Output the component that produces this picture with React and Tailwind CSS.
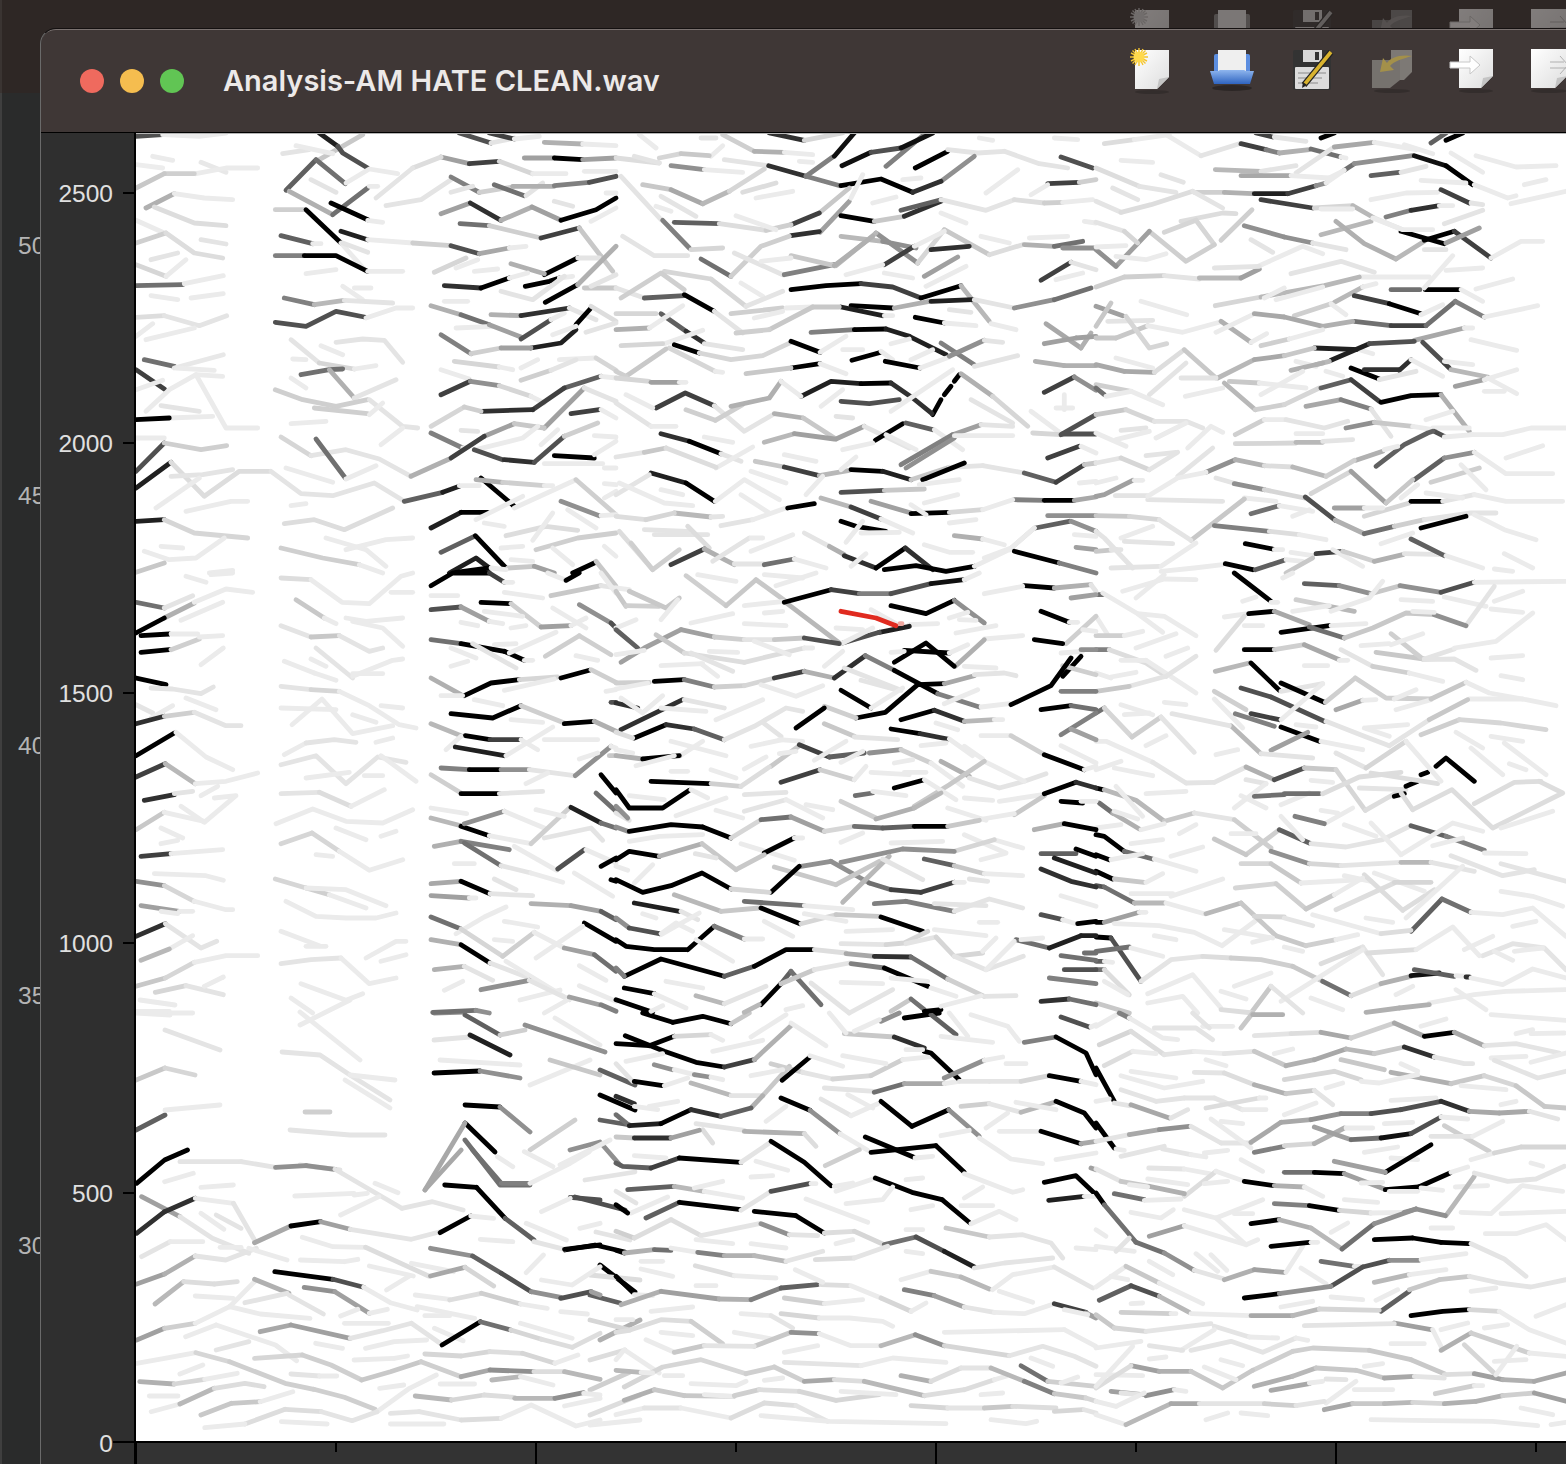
const T1 = `50 0 10 80 5|e8 80 5 190 10 270 0|e8 50 70 110 82|ea 0 95 80 105|e5 195 88 270 118|e8 180 122 270 105 365 105|c8 85 122 175 122|c0 0 165 85 122|b0 30 225 115 182|e8 115 182 205 195 290 200|d8 55 222 175 270 270 278|e8 0 262 85 300|c8 0 330 90 300|d8 90 300 175 360 260 375|e0 195 320 270 333|e0 45 380 125 360|d0 0 395 90 430|e8 90 430 150 380|70 0 458 140 455|e8 145 452 262 428|e8 45 488 125 500|e8 165 495 262 482|d8 0 553 85 548|e0 85 548 190 578 272 548|e8 0 610 50 572|e8 30 620 175 585|70 25 680 115 700|e5 115 705 262 665|e8 120 705 235 712|40 0 710 85 768|e8 0 770 80 742|e8 30 835 100 770 180 725 260 730|e0 75 818 190 835|e8 100 855 230 850|e8 180 725 270 885 365 885|00 0 860 100 855|e8 0 915 85 915|50 0 1015 85 930|c8 85 930 195 950 272 938|20 0 1065 105 988|d8 105 988 205 1090 310 1015 400 1015|e0 105 1030 200 1025 290 1010|e8 60 1125 190 1035|e8 150 1135 285 1105 335 1105|20 0 1165 85 1160|d0 85 1160 175 1200 335 1215|e8 75 1240 140 1245|e8 25 1255 100 1280 180 1275 265 1215|c0 0 1318 85 1290|e8 220 1320 290 1312
c0 550 80 680 5|20 550 0 605 40|50 605 40 620 60 695 105|60 540 80 450 172|70 540 80 628 152|e8 630 150 700 108 785 122|e0 440 62 520 50|e8 480 38 590 62|b0 460 175 590 245|70 590 245 695 165|e8 700 160 725 160|e0 525 140 600 178|c8 418 230 505 230|00 510 230 615 330|e8 615 330 690 415|00 585 210 695 260|e8 695 262 740 268|60 435 308 530 332|e8 530 332 555 332|20 615 295 695 320|e8 695 320 830 330|c8 830 330 945 338|50 945 338 1030 362|a8 1030 362 1120 345|e8 1120 345 1170 340|e0 620 330 695 358|80 418 368 505 368|00 505 368 600 368 695 415|e8 695 415 800 415|e8 510 422 600 410|e8 620 460 680 500|e8 655 465 705 465|80 445 495 535 515|b8 535 515 625 502|e0 625 502 770 510|50 418 568 510 580 600 535 685 552|e8 690 555 780 525 830 525|e0 465 620 550 690|d0 550 690 655 708|e8 655 708 720 698|e0 600 628 680 618 745 622 800 688|e8 555 638 620 665|e8 470 678 510 680|70 495 725 580 710 620 708|b0 580 710 655 795|e0 655 795 780 740|e8 465 735 510 765|c8 418 770 500 800 600 820 695 800|c8 535 825 695 842|e0 700 800 800 880 845 885|e8 735 935 800 885|e8 700 845 740 810|e8 465 872 570 865|d0 435 912 525 968|e0 525 968 630 950 730 978 825 1030|70 540 918 628 1035|e8 630 1038 720 998|b0 825 1030 940 978|e8 450 1005 590 1048|e0 405 1015 495 1082 590 1088 715 1050 805 1105|60 805 1105 920 1078|20 920 1078 970 1060|e8 465 1118 510 1112|d8 445 1172 535 1160 625 1190 770 1125|e8 570 1215 690 1250|e8 630 1250 750 1220 830 1215|e8 690 1250 750 1300|c8 435 1245 560 1275 670 1295|e8 670 1295 740 1320
50 970 0 1065 30|e0 1065 30 1135 15|40 1060 0 1135 18|e8 1135 18 1210 10|b0 1225 28 1340 33|e8 1340 33 1440 38|a0 915 72 1000 92|40 1000 92 1090 85|d0 1090 85 1190 122|e8 1190 122 1290 122|a0 1165 75 1255 75|00 1255 75 1340 80|a0 1340 80 1440 75|e8 1345 115 1440 115|d8 830 105 915 72|e0 720 195 830 105|e0 750 218 855 200 945 140|80 945 132 1030 178|c8 1030 178 1130 162|70 1075 155 1165 188|e0 1170 188 1220 150|e0 945 178 1010 160|b0 1130 160 1255 160|80 1255 158 1360 148|50 1360 148 1440 130|a0 915 242 1003 210|30 1003 210 1095 262|b0 1095 262 1188 222|a0 1188 222 1275 262|00 1275 262 1380 230 1440 195|e0 1255 205 1310 220|e8 1365 265 1440 225|70 972 272 1060 278|c8 1060 278 1215 315|40 1215 315 1330 285|c0 1330 285 1395 370|c0 1395 370 1430 415|e8 1410 180 1440 180|00 1225 425 1325 375|e0 1325 375 1390 375|b0 1125 392 1225 422|d0 895 418 990 375|e8 960 405 1025 380|e8 1015 415 1085 408|30 925 458 1035 465|00 1035 465 1120 435|e8 1120 435 1175 420|00 1168 460 1240 445 1270 435|e8 1270 435 1310 430|00 1228 508 1325 455|b0 1325 455 1440 340|c0 1345 465 1440 465|e0 1365 460 1440 425|e0 1095 475 1190 500 1285 430|e8 925 505 995 505|b0 885 518 975 545|70 975 545 1060 575|e8 960 585 1070 580|a0 1060 575 1155 612|50 1155 618 1245 560|e8 1245 560 1285 540|b0 1065 545 1155 548|30 1155 548 1300 525|e0 1300 525 1380 560|00 1320 575 1365 525|20 1185 645 1275 630 1320 590|d8 1365 520 1440 565|e8 1250 605 1320 580|e0 1350 598 1440 570|80 915 605 1005 662|c8 1005 662 1095 645|a0 1095 645 1185 645|d0 955 685 1090 702|e8 1090 702 1130 710|e8 1155 705 1205 680|e8 1270 680 1380 675|d0 1380 675 1440 712|c8 1155 742 1245 712|e0 1245 712 1320 680|e8 915 710 1000 738|40 915 785 1003 745|90 1003 745 1090 758|d0 1090 758 1185 790|e8 1185 790 1225 810|60 1285 765 1395 730|40 1190 830 1285 765|e8 1395 730 1440 735|30 1035 835 1190 830|d0 885 880 985 822|c8 985 822 1035 835|a0 1225 885 1345 765|e0 1345 765 1440 805|40 1305 842 1390 830|e8 1395 830 1440 855|a0 1045 910 1135 872|c0 1135 872 1225 885|80 885 900 980 945|e8 980 945 990 945|40 945 975 1045 910|e8 1020 950 1160 915 1205 880|e8 1215 935 1265 890|e8 1375 908 1440 912|e0 975 892 1025 895|50 1015 950 1100 980|30 1105 980 1195 988|50 1195 988 1285 910|c8 1285 910 1385 870|00 1255 968 1375 975|e8 1225 992 1400 992|e8 1375 965 1440 925|e8 1405 1005 1440 1005|00 1035 1035 1135 1120|b0 1020 1040 1100 1048|c8 1100 1048 1225 1058|e8 1225 1058 1250 1058|e8 1135 1125 1320 1040|c8 1320 1040 1440 1145|90 1275 1105 1390 1148|e8 1395 1148 1440 1145|e8 1405 1052 1440 1055|e8 1405 1095 1440 1075|e8 970 1058 1030 1058|20 885 1185 975 1138|00 975 1138 1055 1138|e8 1020 1160 1160 1090|e8 1045 1170 1105 1180|d8 1110 1208 1230 1180 1325 1192|e8 1190 1222 1250 1140|e8 1295 1130 1380 1185|c8 1200 1250 1325 1215 1440 1200|e8 1405 1240 1440 1270|60 915 1258 1015 1210|00 1018 1208 1110 1305|c0 1115 1305 1195 1300|a0 1195 1300 1255 1320|e8 1250 1245 1310 1295|e8 1095 1245 1160 1240|e8 1125 1280 1190 1285|20 940 1320 1020 1275 1060 1305|00 960 1318 1060 1305|e8 1065 1305 1110 1310|00 1310 1320 1375 1290|c0 1380 1285 1440 1360`;
const T2 = `30 460 0 565 22|d0 565 22 680 0|c8 320 5 415 55|b0 415 55 505 58|e8 505 58 590 65|e0 255 15 300 15|e8 285 70 320 38|e8 70 5 120 45|d8 0 75 130 90|e0 55 70 130 90|d0 130 75 195 62|c0 195 62 280 68|90 165 98 265 110|e8 265 110 380 118|e0 325 80 455 98|30 458 98 570 130|80 570 130 672 158|80 570 130 650 72|10 655 70 715 0|10 678 98 765 58|50 765 58 855 45|80 810 100 930 0|10 855 45 950 0|00 898 105 995 55|e0 995 50 1085 60 1165 55|e0 1165 55 1270 92 1355 105|90 975 145 1075 70|50 1335 72 1430 105|40 1295 152 1390 148|c8 1390 148 1440 140|e8 1245 185 1295 155|e8 1110 180 1205 110|00 675 158 795 138 890 178|30 890 178 975 145|e8 1090 15 1130 22|e8 1315 15 1385 20|e8 860 140 915 135|e8 550 85 590 88|e0 15 130 75 195 135 260|c0 80 155 165 170|a8 165 170 260 212|b8 260 212 340 175|d0 340 175 445 108|d8 380 178 480 150|e8 420 195 530 175|e0 135 190 240 250|e8 120 220 165 235|c0 610 240 700 165|40 525 275 610 240|a0 612 298 700 205|30 525 308 610 296|00 675 248 775 265|c0 775 265 865 250|30 865 250 975 205|60 855 232 975 200|e0 975 200 1110 232 1195 200|d8 1195 200 1285 210|c8 1285 210 1340 208|e8 1340 208 1430 200|e8 770 210 840 192|e8 705 195 740 125|60 175 268 310 272|d8 310 272 450 292|c8 450 292 525 275|80 140 262 220 345|d0 225 350 320 345|e8 360 248 480 290|e8 975 240 1050 270|e8 1405 265 1440 270|b8 675 310 800 325|90 800 325 900 345|90 780 300 905 390|b8 660 398 780 300|d0 905 390 985 290|c0 985 290 1120 365|d8 1120 365 1220 335|30 945 350 1060 340|40 805 395 895 340|e8 895 340 985 295|a0 925 430 1025 372|e8 930 460 1050 400|b0 1225 335 1315 340|70 1315 340 1400 325|90 1340 345 1440 345|e8 1095 310 1180 330|e8 1240 315 1355 310|e0 20 310 115 368 215 368|70 255 378 345 430|c8 345 430 435 340 520 310|e0 355 360 500 425|80 505 425 655 395|c0 525 368 655 398|b0 655 398 770 310|e8 435 385 525 375|e8 690 425 800 395|e8 805 420 890 435|40 1275 442 1365 388|e0 1365 388 1440 410|e8 1320 440 1400 420|d0 145 415 285 438|d0 285 438 390 520|e8 375 450 440 490|e0 0 465 85 495|60 85 495 205 488|00 205 485 295 535|e0 295 535 380 600|c8 15 495 135 420 205 470|e0 390 520 500 475|00 525 470 630 458 735 452|40 735 452 830 462 915 495|00 915 495 1035 458|b8 1035 458 1120 565|e8 1125 572 1200 590|00 705 518 830 525|20 675 522 800 548|e8 805 548 830 548|b0 835 525 940 505|20 945 505 1070 500|e0 1075 500 1195 525|90 1195 525 1315 500|70 1315 500 1425 465|00 898 553 985 570|e8 985 570 1080 578|e0 1000 530 1065 538|c8 345 542 500 525|e8 415 555 500 535|e8 510 525 590 522|c0 590 522 670 522|c0 460 590 590 522|c8 360 600 460 590|d0 0 542 120 542|60 135 542 210 595|30 210 595 265 630|b0 0 590 100 585|e8 100 585 200 518|e8 145 632 260 592|d0 15 638 140 632|00 175 635 250 660|80 585 598 715 590|00 715 590 810 588|20 810 588 880 610|20 880 610 990 665|e0 265 632 380 650|d0 250 660 345 680 440 668 525 628|00 525 625 612 658|e8 612 658 690 610|e8 680 650 740 650|e8 825 632 880 618|00 525 705 612 692|e8 612 692 690 722|00 708 682 795 658|e8 795 655 830 680|00 808 685 912 705|e8 912 705 1000 672|e8 885 680 950 650|c0 390 722 525 705|d0 160 645 298 715|e8 298 715 320 718|c0 30 730 150 648|c8 0 715 30 730|d0 0 735 100 745|a0 105 748 190 748|e8 190 748 210 748|80 975 630 1075 695|90 1000 670 1105 622|e0 1105 622 1160 628|e0 1075 700 1205 668|b0 1258 685 1345 698|b0 1345 698 1440 698|a8 1290 572 1395 645|b0 1395 645 1425 600|a0 1285 632 1380 615|a0 1380 615 1440 610|40 1285 778 1375 732|90 1375 732 1440 772|00 950 845 975 800|00 985 785 1005 760|00 1015 745 1030 725|20 555 790 645 745 735 752|00 735 752 825 750|30 825 750 890 795 948 842|b0 1035 722 1130 790|d0 1130 790 1235 880|e0 1065 800 1190 870|40 120 825 208 780 295 818|e0 295 818 385 895 470 845|b0 475 842 562 855|c0 562 855 660 918|a0 660 918 745 880|e0 745 880 880 945|c8 210 830 298 862|c8 298 862 380 815|b0 345 820 460 795 495 745|e8 495 745 555 790|e8 30 785 110 825|e0 0 810 105 880|e8 105 880 180 880|e8 615 820 680 770|50 675 805 760 812 850 800|e8 825 835 1010 710|e0 660 850 710 855|e8 1320 825 1370 825|e8 1345 785 1345 830|e8 1245 835 1340 905|d0 1250 900 1335 905|50 1335 905 1440 845|50 1340 903 1440 903|00 778 922 860 872|60 870 870 950 890|e8 955 890 1040 950|e8 810 905 900 950|a0 1010 905 1095 875|80 855 995 1010 905|90 870 1005 1015 915|e8 1015 908 1190 908|e0 1095 875 1190 880|30 135 902 220 925|00 220 925 315 962|e0 315 962 375 985|e8 300 1005 410 942|e8 265 912 350 928|e0 0 972 85 958|c0 85 958 150 945|d8 150 945 300 1003|b8 445 928 535 902|a0 535 902 655 918|e8 680 950 770 930|c0 418 985 505 1002|40 505 1002 610 1028|b8 610 1028 700 1012|00 705 1010 800 1015|20 800 1015 885 1040|c0 885 1040 1000 1003|e0 1000 1003 1100 998|e0 1100 998 1225 1020|60 1225 1020 1320 1048|40 1320 1048 1405 995|c0 1405 995 1440 990|00 920 1040 1045 990|e8 1390 1050 1440 1045|e8 505 965 600 985|e8 675 1010 720 972|40 1295 975 1390 940|e8 1395 940 1440 960|20 105 1020 210 1050|00 210 1050 295 1105|e8 298 1105 385 1040 490 1100|e0 0 1085 100 1025|e8 405 1015 510 1050|e8 135 1070 200 1085|e8 10 1050 145 1110 230 1118|e8 375 1085 460 1140|50 675 1078 805 1072|c0 805 1072 925 1068|e8 910 1055 1030 1040|e8 570 1085 620 1030|e8 925 1110 1025 1085|80 1195 1100 1285 1102|00 1285 1102 1375 1102|a8 1375 1102 1440 1092|d8 0 1150 90 1160|b8 175 1140 285 1152|d0 90 1160 175 1140|e0 285 1152 320 1150|e0 315 1178 410 1160|e8 410 1160 510 1125|00 515 1125 595 1112|b8 615 1095 705 1122|40 705 1122 795 1158|e8 795 1158 890 1200|a0 765 1105 885 1140|00 885 1142 1000 1138|d0 1000 1138 1100 1130|e8 1100 1130 1190 1100|e8 885 1115 930 1145|e8 1000 1170 1080 1160|90 1295 1148 1440 1148|00 675 1165 720 1180 810 1195|e8 690 1228 740 1165|e8 735 1200 850 1198|b0 1015 1208 1100 1218|e8 1100 1218 1165 1235|60 1258 1185 1360 1165|d8 1180 1250 1255 1185|90 1365 1165 1440 1195|e8 1375 1205 1440 1210|a0 1380 1243 1440 1250|e0 85 1190 215 1195|e0 115 1205 275 1205|d8 215 1180 280 1245|d8 10 1195 110 1310|c8 45 1230 110 1310 190 1250|40 165 1295 265 1248|b0 265 1248 355 1295|e0 355 1293 445 1293|70 445 1295 535 1278|e8 535 1278 630 1305|e0 290 1285 400 1215|e8 405 1215 440 1215|e8 405 1255 530 1205|e0 565 1200 640 1240|b0 640 1240 685 1265|30 685 1268 780 1305|00 780 1305 868 1245|30 868 1245 950 1310|00 805 1310 900 1298 990 1315 1075 1300|e8 1075 1300 1180 1250 1255 1185|e8 705 1300 750 1262|e8 925 1235 1000 1258|e8 1005 1258 1070 1258|e8 1105 1275 1185 1245|00 1195 1255 1330 1290|80 1330 1290 1440 1320`;
const T3 = `d8 25 32 115 20|e8 115 20 220 5|e8 215 8 315 68|e0 315 68 430 32|40 435 32 510 50|80 510 50 550 60|b0 550 60 640 50|70 645 48 735 72|e8 735 72 750 75|40 480 0 530 12|e0 535 12 630 25|e0 600 120 710 45|00 675 15 715 0|a8 715 42 835 28|e8 835 28 960 50|e8 925 35 1010 62|60 1005 30 1050 0|00 1050 22 1100 0|e8 75 82 170 88|e0 195 125 262 148|b8 358 110 495 115|e0 495 115 600 98|a8 435 128 580 128|e8 585 128 700 135|e8 700 135 745 112|70 745 112 775 92|90 775 92 950 68|10 955 68 1050 98|00 1050 98 1130 155|e8 1135 155 1235 195 1260 188|60 825 128 910 118|e0 915 118 990 100|e8 1065 60 1160 118|e8 1140 68 1260 102 1380 98|e8 1285 155 1350 140|e8 975 142 1110 150|e8 825 200 930 180 1025 178|40 1035 170 1120 210|e0 1125 210 1160 215|e8 1245 212 1410 175|d8 0 105 130 160|e0 50 165 125 200|e0 130 160 240 178|c8 295 178 385 178|b0 385 178 470 182|20 475 182 575 182|40 575 182 660 158|90 660 158 690 150|e8 690 150 745 112|e0 0 205 75 238|d8 75 238 165 215 290 175|e0 290 175 380 225|40 495 200 650 225|d0 655 225 770 218|b8 770 218 835 255|e0 835 255 920 290|e8 675 228 770 228|b8 675 305 825 265|80 870 252 945 232|30 945 232 1030 218|e8 1030 218 1070 218|b0 720 265 805 332 900 378|b8 900 378 985 325|00 915 295 1045 332|00 985 322 1075 295|40 1075 295 1185 375|a0 1050 330 1150 285|e8 1185 375 1275 325 1340 325|e0 985 350 1050 350|e0 1045 272 1160 232|e8 830 255 920 290 1010 290|e0 0 268 85 295|d8 255 265 380 240 420 242|d0 205 298 300 262|d0 300 262 355 335|c8 160 295 270 385 355 335|a0 60 400 160 295|90 0 350 60 400|e8 60 370 150 380 210 362|e8 0 342 90 338|d0 85 295 125 330|c8 375 322 468 230|90 445 278 565 312|90 565 312 650 330|e0 650 330 750 350|e0 465 320 530 358|e8 490 398 620 340 680 362|c8 0 462 85 432|c8 85 432 205 428|e0 205 428 310 438|b8 310 435 435 435|a0 435 435 490 408|e0 355 405 490 400|e0 585 422 735 385 835 418|e8 795 432 1000 432|d0 358 518 495 492|b8 495 492 685 458 790 432|e8 505 495 565 465|e8 540 500 680 462|b8 715 508 800 462|e8 800 462 840 452|70 885 470 972 470|00 988 470 1090 470|e8 1095 470 1160 505|e8 985 465 1070 368|e8 1050 412 1160 405|e8 1140 468 1250 438|40 775 488 880 512|00 880 512 975 542|e8 975 545 1040 515|70 775 565 885 578|40 885 578 990 578|70 990 578 1078 505|80 1078 505 1165 552|e8 1165 552 1325 518|c8 595 548 705 512|e8 705 512 750 545|e8 135 505 272 545|a0 0 520 80 548|c0 0 580 45 510|e0 35 565 170 562|c0 60 615 155 578|e8 155 578 260 598 370 568|c0 0 615 60 615|d0 90 550 160 645 212 632|b0 375 565 465 628|e8 465 628 512 602|e8 360 598 470 545|a8 475 542 565 552|a8 565 552 680 580|b0 680 580 770 565|c8 495 638 580 618|e8 580 618 680 590|a8 955 622 1105 585|e8 1105 585 1130 585|20 655 645 790 650|e8 790 650 830 662|20 705 682 820 632|50 820 632 955 625|50 980 628 1045 690|40 1045 690 1060 705|e8 1045 685 1130 695|e8 1125 620 1210 640 1262 652|b8 365 735 475 680|a8 475 680 565 668|c0 565 668 655 645|e8 600 685 660 700|b8 660 695 700 685|b0 585 712 680 690|00 765 705 850 738|30 805 710 910 710|30 910 712 945 680|e8 945 680 1040 730|e0 850 740 960 715|b8 1065 710 1175 732|e8 1175 735 1262 782|a0 1078 760 1165 740|e8 1165 740 1262 710|e8 1165 775 1225 775|e8 690 715 740 730|a8 0 695 85 715|a8 85 715 175 718|d8 175 718 265 650|c0 265 650 360 735|e0 160 785 270 690|e8 60 675 170 705|e0 255 735 360 735|e8 268 790 380 765|c0 400 745 490 750|b8 385 750 478 830|c8 478 830 565 815|e8 490 750 630 765|e8 495 785 620 715|d0 565 815 670 765|60 675 765 765 740|40 765 740 850 805|00 855 808 945 788 1035 785|b0 1035 785 1120 895|a8 630 820 735 800|80 735 800 825 828|e0 825 828 885 910|c8 0 755 105 775|e8 105 775 200 815|70 0 765 25 785|e8 30 790 105 775|c0 0 845 90 830|d0 90 830 175 865|e0 175 865 270 865 320 885|e0 75 892 150 885|e8 60 920 160 895|e8 180 915 270 870|e8 0 900 90 940|e8 275 945 345 880 380 898|c8 418 905 505 860|e8 505 860 570 860|e0 570 860 685 885 755 865|90 750 885 835 868|c0 835 868 950 880|e8 950 880 1010 890|e8 1010 885 1120 885|e8 990 860 1070 835|50 1015 895 1045 910|e8 1045 912 1130 905|e8 1125 905 1220 905 1305 885 1410 885|d0 418 932 600 930|b8 600 928 680 928|e0 680 925 770 920|e8 600 902 680 902|60 840 1000 925 935 995 900 1010 895|b0 780 982 860 955|e8 865 950 905 940|e0 0 990 75 975|d0 75 975 160 1010|e0 160 1010 245 958|e0 150 968 240 958|e0 245 1030 350 945|90 330 1018 418 980|b0 418 980 505 998|d8 505 998 590 1002|b8 590 1002 690 1030|c8 690 1030 775 982|60 955 1040 1045 975|90 1045 975 1135 958|e8 1135 958 1230 1022 1370 1022|c8 1005 1048 1150 1005|e8 1095 995 1170 1070|e8 1230 975 1340 938|a0 0 1090 25 1085 110 1042|e8 115 1042 140 1042|e8 0 1050 60 1035|e0 58 1088 155 1088|e0 155 1100 380 1105|e8 155 1090 245 1035 330 1018|e0 360 1035 420 1052|90 415 1052 505 1070|d0 505 1070 625 1095|50 628 1092 718 1162|b0 718 1162 805 1202|70 805 1202 895 1180|c8 895 1180 985 1160|e0 985 1160 1125 1140 1200 1140|00 975 1185 1110 1150|d0 645 1082 765 1015|a0 765 1015 870 1110|c0 870 1110 950 1040|e8 915 1095 965 1055|d0 805 1150 940 1110|00 945 1105 1040 1105|e0 1040 1105 1135 1085|e8 1135 1085 1230 1105 1400 1105|e8 990 1080 1100 1095|a0 715 1125 805 1125|e8 805 1125 860 1125|e8 445 1095 540 1105|70 465 1142 550 1118|e8 550 1118 650 1135|e8 590 1150 640 1130|c0 285 1222 445 1098|c0 0 1148 100 1150|d0 100 1150 190 1160|e0 190 1160 285 1222|e8 75 1215 170 1180|e0 85 1225 230 1232|80 355 1178 520 1195|d8 520 1195 610 1205|e8 610 1205 690 1220|00 448 1232 530 1248|e8 535 1250 560 1250|e8 585 1258 650 1268|40 660 1262 740 1255|e8 710 1250 800 1300|c8 740 1255 835 1285|b0 835 1285 920 1265|e0 925 1262 1045 1265|60 945 1218 1045 1268|e8 1050 1268 1160 1305|e8 855 1232 950 1200|e8 1135 1145 1225 1190 1320 1220|c0 0 1255 60 1250|e0 45 1250 75 1250|e0 0 1195 25 1215 110 1305|e0 45 1305 190 1300|e8 195 1300 300 1230|e8 195 1315 295 1305 380 1295|00 388 1292 470 1310|60 478 1310 565 1282|e8 570 1280 620 1285|c0 570 1320 650 1275|e8 1225 1262 1310 1305|e8 1195 1308 1250 1315`;
const T4 = `e8 150 10 210 28|e8 225 5 290 0|70 0 88 85 105|e0 85 105 170 68|b0 85 135 175 90|e8 175 88 270 48 350 58|00 0 180 85 135|e8 135 142 260 88|00 15 188 100 183|e8 105 183 185 183|00 15 238 100 230|c8 105 230 190 198|e8 190 192 260 188|e8 195 275 262 225|00 0 315 90 335|e0 45 345 110 348 195 362 232 342|e8 150 375 240 410|e0 0 395 50 420|e8 45 435 110 398|30 0 452 85 430|c8 85 430 175 418|e0 175 418 270 458 315 458|00 0 548 115 480|e8 120 478 210 552 290 590|40 0 612 88 572|b8 88 572 178 632|e8 178 632 270 625 365 600|30 25 682 115 665|e0 115 662 170 655|e8 195 668 245 640|e8 235 675 300 668 205 748 135 700|c0 0 770 85 718|e8 85 718 205 745|e8 75 765 140 795|e8 75 812 125 802|40 15 850 105 842|e8 105 842 260 830|e8 55 902 210 908 262 922|90 0 925 85 938|d0 85 938 175 985|e8 175 985 270 1010 290 1010|a0 15 998 130 1015|e8 75 1015 125 1022|e8 130 1015 170 1015|30 0 1090 88 1052|e0 88 1052 195 1125 242 1105|e8 105 1125 170 1088|b8 15 1162 100 1128|c0 0 1240 88 1215|d0 88 1215 175 1168|e8 175 1168 270 1148 365 1148|d0 58 1258 150 1238|e0 150 1238 262 1265|e8 205 1240 262 1212|e8 0 1315 100 1315|e8 100 1320 170 1320
d8 435 15 525 20|e8 525 20 618 88 700 92 795 10 830 0|e8 765 58 830 58|c0 480 80 565 135|e8 565 135 600 152|e8 630 135 690 145 800 135|e8 650 145 740 165 800 220|e0 435 158 525 192|c0 525 192 610 188|e0 610 188 700 235 740 225|e0 540 225 650 315|e8 650 310 770 262 800 258|e8 445 265 535 300|e8 535 300 600 322|e8 525 258 570 280|e8 650 302 740 302|e0 435 340 525 350|d0 525 350 610 355|e8 610 355 700 398 790 455 840 465|e8 735 398 800 405|e8 435 405 600 410|e8 468 455 558 378 650 482 770 458|e8 650 425 720 448|e8 445 545 510 510|e0 510 510 595 500 660 508|e8 720 508 770 495|e0 435 575 540 548 630 632 725 552 810 568|e8 735 548 840 625|e8 510 615 640 598|e8 685 608 740 608|e0 435 662 550 658|d8 550 658 645 700|e8 645 700 745 650|e8 420 752 530 708 630 745 740 750 830 710|e8 600 765 690 800|e8 735 790 780 775|d0 435 812 528 780|d0 528 780 610 835|e8 610 835 700 892 800 860|e8 540 845 590 850|d0 418 918 510 945|c8 510 945 580 965|e8 580 965 690 1005|e8 510 945 630 950 750 998|e8 450 985 540 1030 630 1035 720 1035 780 1020|e8 435 1075 550 1118|e8 510 1120 570 1120|e0 435 1172 525 1160 615 1155|e8 615 1155 700 1232 780 1215|e8 690 1155 780 1105 810 1105|e8 735 1165 810 1145|e8 495 1232 630 1282 680 1262|e8 465 1275 530 1320
e8 1235 0 1290 22|00 1290 22 1330 0|00 885 38 950 0 1060 0|40 1060 0 1105 28|e8 1105 28 1130 28|e8 885 68 965 68|e8 1105 58 1220 75|c0 1245 68 1395 38|e0 1395 38 1440 45|e8 1395 0 1440 60|00 1035 88 1125 92|c8 1125 92 1215 162|a0 1215 162 1305 158|e8 1305 158 1350 135|50 885 110 975 102|a0 975 102 1060 145|e8 1060 145 1100 152|e8 1045 115 1160 130|e8 975 148 1025 158|e8 1125 165 1170 158|e8 1250 105 1350 165|90 1330 95 1425 150|50 1425 150 1440 165|70 885 200 975 212|00 975 212 1105 235|00 1105 235 1165 262|e8 1165 262 1190 262|e0 1010 212 1140 285|e8 945 225 1020 255|e8 1075 215 1140 212|e8 1120 240 1260 178|c8 1228 250 1330 188|c8 1330 188 1425 245|e8 1320 248 1385 262|e8 945 280 995 265|b0 885 315 975 365|00 985 368 1065 330 1150 320|d0 1150 320 1265 312|e8 1105 352 1255 318|00 1275 315 1360 292|c8 1365 290 1440 328|e8 915 368 980 368|e8 1015 380 1100 398|00 945 422 1070 435 1155 398|c8 1155 398 1285 450|00 1285 452 1375 445|b0 1375 445 1440 475|e8 1125 440 1220 448|e8 1410 355 1440 350|50 1425 388 1440 388|b8 885 452 975 488|00 988 488 1062 500|40 1062 500 1155 500|e8 1155 500 1205 530|e8 930 530 975 490|20 958 522 1105 548|e8 1110 548 1250 462|e8 1225 500 1385 500|80 915 585 1000 590|00 1000 590 1090 590|90 1095 590 1180 590|e0 1180 590 1315 608|90 1318 608 1425 520|e8 1425 520 1440 525|c0 1420 548 1440 548|e8 1330 558 1385 540|e8 1170 632 1235 600|c8 885 605 975 660|00 975 662 1090 662|e0 1090 662 1220 655|00 1395 605 1440 660|70 1380 660 1440 715|e8 885 705 992 722|b8 885 735 975 758|00 975 760 1060 788|e8 1060 788 1185 812|90 985 752 1105 715|e8 1105 715 1225 765|c8 1185 812 1300 705|e0 1225 795 1365 765 1400 802|e8 1200 710 1285 730|20 1305 703 1395 750|70 1395 750 1440 765|b0 895 820 975 805|80 975 805 1120 830|70 985 810 1095 878|e0 1095 878 1185 900|e8 1185 900 1280 928|e8 1135 820 1262 892|50 1265 888 1345 830|e8 1350 830 1440 870|00 1395 880 1440 855|00 1425 920 1440 925|e8 1315 900 1430 970|e8 955 872 1015 872|a8 885 932 975 925|00 975 925 1062 962|e0 1062 962 1190 968|e0 1075 918 1140 950|a0 885 968 1000 975|e8 1000 975 1020 975|b0 1185 992 1305 998|a0 1305 998 1395 1015|60 1395 1015 1440 1040|70 885 1032 975 1068|e8 960 1082 1045 1032 1110 1002|d0 975 1068 1100 1150|c8 1100 1150 1195 1078|e8 1195 1078 1285 1125|e8 1105 1045 1205 1062|e8 1075 1100 1130 1105|00 1345 1050 1440 1105|e8 1200 1155 1340 1060|b0 885 1100 975 1115|00 975 1115 1062 1170|e0 1062 1170 1180 1215|e8 1110 1165 1300 1280|a0 1285 1125 1375 1145|70 1375 1145 1440 1195|e8 1330 1178 1410 1222|e8 1330 1238 1440 1285|b0 895 1190 985 1180|e0 985 1180 1070 1222|e8 925 1252 980 1225|90 1035 1250 1180 1222|e0 1180 1222 1300 1280|e8 1225 1320 1305 1275|70 890 1318 1020 1312|90 1020 1312 1060 1320|a0 1300 1272 1390 1295|80 1395 1295 1440 1315`;
const T5 = `e8 0 45 40 50|c0 0 55 30 100|c8 30 98 130 100|c0 40 55 150 105 190 75|e8 135 140 185 80|c8 210 8 330 98|c0 330 98 420 20|c0 420 20 505 82|b8 505 85 670 210|e8 385 98 505 85|e8 0 165 60 140|e8 225 150 350 122|e8 385 152 510 158|e8 445 120 500 115|e8 245 5 360 25|e8 445 5 560 15|e8 480 38 600 0|00 505 88 645 50|40 645 50 730 62|80 730 62 825 62|50 825 62 945 32|10 945 32 1045 20|e8 1045 20 1090 0|00 1225 38 1315 45|b0 1315 45 1425 35|e0 1425 35 1440 55|e8 1105 62 1220 40|a0 1365 75 1440 65|e8 765 110 845 155|e8 880 155 965 152|00 825 98 930 122 1015 82|90 1015 82 1105 150|e8 1020 180 1140 158|e8 1000 135 1055 118|e8 1030 140 1080 142|e8 660 165 740 170|20 790 178 880 160|50 680 210 790 178|e8 680 210 770 165|e8 1105 198 1220 188|b0 1018 280 1105 200|00 1275 115 1360 148|e8 1360 148 1385 148|c8 1350 212 1440 130|00 1255 200 1340 212|e8 1400 170 1440 175|00 835 268 930 210 1015 280|00 865 232 1000 240|e8 825 238 865 235|e8 1000 240 1055 215|60 0 170 65 225|a0 15 268 85 225 195 170|a0 195 170 295 192|c8 295 192 385 200|e0 385 200 475 200|c0 475 200 565 195|50 565 195 670 212|c0 120 185 205 240|d8 205 240 385 268|d8 385 268 565 225|e8 565 225 590 225|e8 0 245 85 232|e0 225 240 350 295|e8 415 205 520 245|e8 135 278 260 272|e8 280 235 365 238|e8 625 280 680 235|e8 255 272 305 310|e8 1045 280 1140 285|e8 1335 240 1400 235|00 1340 310 1395 250|c8 1340 278 1440 305|90 1395 230 1440 230|c8 0 330 100 328|00 115 325 205 320|80 205 320 295 342|c8 295 342 385 338|d0 385 338 475 315|40 475 315 565 295|b0 565 295 655 315|e8 0 348 95 330|e8 435 335 540 370 620 338|30 655 315 748 248|80 748 248 835 292|e0 685 285 855 352|e0 735 322 840 350|00 835 292 965 362|80 965 362 1090 402|e8 1095 402 1180 392|00 720 435 808 418 905 335|c8 625 400 720 435|00 905 335 985 332|a8 985 332 1075 308|e0 1075 305 1165 300 1200 308|e8 985 392 1085 350|00 675 352 765 405|e8 765 405 860 345|00 1185 395 1305 338 1365 255|80 1335 355 1440 355|00 1275 410 1365 398|70 1365 398 1440 410|80 1335 485 1440 420|a0 1365 468 1440 500|30 0 390 65 405|e8 15 375 80 420|e8 85 415 140 368|30 15 470 200 380|e0 205 380 325 405|e8 135 405 270 415|e8 300 440 440 380|00 55 495 150 455|30 150 455 235 468|60 235 468 325 500|e0 325 500 415 460 510 405 560 415|d8 0 478 50 495|00 540 465 625 405|c0 625 452 715 490|e0 715 492 845 500|00 855 440 955 412|30 955 412 1045 445|b8 1045 445 1135 440|e8 1135 440 1160 440|00 825 468 912 482|30 912 482 995 498|e8 1000 498 1070 548|e8 1045 520 1100 558|e8 960 450 1025 470|e8 915 518 990 510|e8 1095 488 1180 488|c8 1185 488 1285 545|00 1285 545 1405 590|e8 1405 590 1440 580|e8 1335 518 1440 570|e8 405 520 500 500|e0 445 452 495 490|e8 0 530 50 540|e8 165 505 330 548|e8 190 550 260 505|e8 490 500 560 505|b0 0 548 80 558|00 80 558 190 548|e8 60 578 175 548|c0 465 580 550 518|40 550 515 640 552|60 640 552 745 540|90 760 540 855 530|c8 855 530 945 570|e8 945 570 1040 640|e8 595 562 690 505|e8 675 568 740 535|e8 490 542 540 535|e8 385 588 450 552|b0 975 565 1060 610|e0 1060 615 1150 645 1225 625 1290 602|e8 1105 565 1225 625|c0 895 700 1000 635 1105 565|e8 165 595 215 595|e8 285 590 360 615|40 495 628 612 590|c8 612 590 715 620|e8 715 620 750 580|e8 765 598 880 605|e8 835 570 890 560|e8 865 598 930 598|00 105 625 280 632|c8 285 632 375 640|d8 375 640 460 582|00 0 650 40 705 140 705 220 652|e8 225 650 275 675|e8 40 668 145 680|00 835 645 920 622|e8 925 620 1020 680|70 718 668 770 660|e8 770 655 870 668|e0 385 665 510 658|e8 180 728 330 675|e0 385 715 510 680|e8 510 680 620 735|e8 570 695 650 710|c8 675 685 780 735|b0 780 738 895 705|b8 895 705 975 660|e8 300 712 380 735|e8 1045 675 1130 682|e8 1150 685 1280 665|c0 1195 725 1285 668|00 1285 662 1380 628|30 1380 628 1440 645|00 1335 685 1400 690|e8 1395 685 1440 685|e8 995 705 1110 742|e8 1100 738 1195 722|90 0 762 35 775|00 40 775 165 755 260 762|00 260 762 345 795|d0 345 795 435 740|70 435 740 525 732|a0 525 732 625 775|d0 625 775 715 760|70 715 760 800 765|60 800 765 895 760|00 895 760 995 760|c0 995 760 1090 742|b0 1255 770 1345 752|00 1345 752 1440 770|e8 40 805 130 790 260 785|e0 0 720 40 742|90 0 700 35 735|e8 375 812 535 862|00 445 840 535 795|e8 535 795 560 795|e8 675 808 740 780|e8 825 810 980 805|e8 1045 785 1170 840|e8 1095 860 1165 842|e8 1135 800 1220 825|d0 1015 835 1135 800|00 0 860 40 835 130 850|b0 130 850 258 812|c0 258 812 360 890|c0 360 890 445 845|e0 238 842 300 855|90 555 880 645 865|90 645 865 760 930|70 760 930 825 950|40 825 950 915 958|40 915 958 1015 928|e8 1015 928 1045 928|90 675 868 860 828|90 860 828 1015 835|60 925 858 1015 878|c0 1015 878 1105 902|e8 1105 902 1220 908|c0 475 882 660 935|c0 660 935 790 865|b8 680 988 820 850|e0 800 858 920 920|00 465 958 550 880|e8 0 880 35 892|e8 55 930 110 875|e0 1060 918 1115 925|60 1275 842 1380 842|00 1380 828 1440 850|20 1315 855 1440 900|30 1275 888 1365 925 1440 942|00 0 920 80 958 165 938 258 900 345 948|d0 345 948 460 958|e8 1335 968 1440 1000|b8 175 965 315 1015|c0 315 1015 430 1005|20 55 990 190 1015|e0 195 1015 245 1040|70 385 985 565 998|e8 565 998 710 1010|80 775 992 870 985|80 870 985 1015 1015|e0 1015 1015 1120 978 1220 1005|e0 955 992 1110 998|00 435 1005 552 1052|d0 555 1052 660 1025|c0 660 1025 790 1030|00 795 1032 920 1075|e8 565 1022 690 1045|e8 80 1022 120 1035|e8 135 1085 250 1020|50 1275 1025 1340 1040|e8 1340 1040 1380 1052|00 1385 1052 1440 1045|90 0 1035 40 1065|50 40 1065 130 1082|e8 135 1082 180 1050 230 1075|00 215 1130 295 1060|80 295 1060 385 1098|e8 385 1098 440 1098|e8 240 1100 350 1165|e8 445 1045 530 1090|e8 1090 1048 1145 1048|e8 690 1075 830 1070|e0 675 1112 810 1115|d0 810 1115 865 1110 935 1075|e0 870 1112 960 1092|d0 960 1092 1015 1150 1100 1140|e8 955 1070 1110 1088|e8 1100 1135 1140 1095|70 1200 1100 1300 1125|e8 1215 1100 1280 1095|20 1300 1125 1395 1088|20 1395 1088 1440 1088|70 1405 1140 1440 1140|00 0 1100 30 1120 115 1130 210 1130|00 25 1210 135 1158 325 1210|60 325 1210 415 1180|00 415 1180 510 1130 590 1130|d8 595 1130 690 1140|a8 690 1142 775 1150|30 775 1150 885 1152|70 885 1152 995 1218|c8 995 1218 1105 1270|e0 1105 1270 1200 1268|e0 1015 1150 1110 1190 1222 1150|e8 1110 1190 1195 1105|70 1335 1148 1440 1162|50 1345 1190 1440 1190|80 1300 1215 1440 1232|80 0 1185 25 1210|00 25 1245 115 1262|e8 115 1262 210 1305|b8 240 1268 325 1292|e0 325 1292 450 1240|e8 150 1225 260 1245|00 0 1280 110 1318|e8 105 1315 140 1298|60 495 1232 525 1195|00 435 1295 495 1232|70 525 1195 615 1295|c0 495 1232 595 1190|e0 595 1190 700 1170|80 705 1172 805 1185|00 805 1185 935 1240|e8 825 1215 935 1225|e8 945 1245 1020 1270|e8 675 1228 800 1232|e0 585 1230 700 1320|e0 700 1320 830 1250|e8 510 1310 560 1298|30 1275 1285 1360 1278|70 1360 1278 1440 1295|c0 825 1315 885 1278|70 885 1278 925 1310|00 925 1315 975 1310|e8 975 1300 1095 1268|b8 385 1318 430 1295|e02b20 675 115 780 135 840 158|f0a8a0 852 152 858 152`;
const T6 = `00 415 0 525 85|e8 525 88 545 88|e8 80 55 205 18 300 20|e8 120 75 205 5|e8 560 15 590 0|60 625 32 730 38|90 730 38 825 62|c0 825 62 912 38|90 912 38 1035 58|50 1035 58 1135 28|e8 1135 28 1410 25|c8 600 80 700 100|b8 700 100 775 115|e8 705 115 820 75 860 25|e8 915 80 1010 85|e8 1045 72 1170 100|e8 1195 85 1280 55|e0 1110 158 1195 40|e8 440 85 480 72|e8 385 132 455 122|00 458 122 535 115|a8 535 115 640 155|00 555 178 700 158|e8 705 158 810 152|70 640 162 745 195|c0 745 195 830 165 930 120 1015 125|90 1015 125 1110 158|e8 950 115 1015 118|e8 590 115 700 98|e8 1185 108 1280 118|d8 360 232 445 130|e8 445 158 500 158|70 0 65 20 65|e8 20 60 125 122 205 130 300 188|e8 125 122 200 178|e8 0 130 35 185|c8 0 188 80 188|e8 85 188 140 175|e8 120 225 240 182|00 445 230 535 230|c8 535 230 625 215|a8 625 215 730 260|e8 730 262 755 262|e0 735 230 830 280|c8 830 280 940 300|e8 940 300 1040 325|e8 795 218 880 212|c0 840 238 985 258|c8 885 182 980 258|e0 985 258 1075 228|e8 1075 225 1200 205 1310 120|e8 885 215 980 182|e0 985 260 1075 258 1140 292|e8 625 278 695 278|e8 1185 255 1280 248|e8 1215 308 1280 320|80 0 230 40 230|d8 40 230 150 270 210 310|e8 75 262 150 262|e8 150 262 300 360|e8 210 250 275 225|e0 100 340 210 310 300 250|c0 0 355 100 340|e8 0 300 45 315|e8 45 312 120 298|b8 358 295 460 270|00 465 270 550 352|e0 555 355 680 332|00 555 330 685 388|c8 688 388 778 315|c8 778 315 870 375 1005 378|e8 895 378 960 350|a8 720 410 800 382|e8 800 382 840 380|e8 900 410 1005 380|c0 1005 378 1110 328|e8 1110 328 1180 360 1290 380 1380 398|e8 1120 378 1280 378|c8 355 355 450 410|e8 355 378 440 465|50 435 345 525 372|50 525 372 685 445|e0 690 445 805 490 880 518|e8 805 465 880 490|40 465 422 550 440|e8 555 440 680 332|80 418 422 535 460|00 555 462 670 505|e8 675 505 800 530|a0 525 532 635 478|e8 600 455 660 462|b8 405 458 495 542|e0 495 542 650 555|e8 810 465 935 455|e8 360 545 425 530|e0 228 422 400 458|70 0 420 25 405|d0 25 405 108 492|c8 108 492 195 432|e0 195 432 295 538|e8 150 518 210 488|e8 75 395 170 425|e8 205 388 270 395|e8 85 425 160 420|e8 0 505 30 505 170 568|e0 170 568 270 630|e0 270 630 355 628|e0 355 628 450 582|b0 450 582 535 620|50 535 620 625 585|c0 625 585 720 590|d0 720 590 808 712|d8 808 712 900 660|e8 0 590 75 565|e8 55 585 170 608|e8 150 662 270 655|e0 450 620 510 632|e8 415 705 510 632|e8 435 668 510 705|e8 555 695 640 660|e8 645 622 710 628|70 475 670 565 665|70 565 662 670 662|d8 680 662 790 612 915 598|e0 790 645 930 650|00 895 670 925 662|00 930 640 965 625|00 975 605 995 598|00 1020 580 1050 555 1135 625|d8 825 600 1025 632|d8 915 660 950 710|d8 950 710 1068 650 1190 765 1400 660 1330 625|d8 1135 692 1255 628 1335 625|e8 1215 765 1370 715|e0 720 540 810 585|d0 810 585 930 505|e0 880 518 1000 440|c0 1000 440 1115 380|c8 975 485 1090 440|d0 1090 440 1215 450 1350 470|e8 1185 490 1280 505|e8 1080 478 1160 525|e8 1125 525 1220 605|e8 930 505 1035 625|e8 1225 510 1350 605|e8 1240 572 1290 590|00 0 645 20 650|b8 25 650 120 682 205 745|c0 205 745 295 720|e0 295 720 415 740|c8 415 740 525 825|c8 450 845 550 770|c0 355 798 450 845|60 550 770 640 810|e0 645 812 750 822 860 800 945 758|60 945 758 1050 790|80 1050 790 1165 832|e8 1165 840 1290 842|70 10 690 50 720|b0 50 720 130 768|e8 135 770 205 752|e8 55 715 125 738|e8 60 640 140 730|e8 0 765 75 755|e8 105 812 200 800|e8 225 850 320 822|e8 250 782 300 755|e8 405 782 480 782|e8 745 755 840 790|e8 675 712 725 720|e8 690 750 770 705|e8 555 730 620 800|80 597 730 685 752|e8 825 750 915 845|e8 915 845 1070 750 1160 775|e8 1010 818 1100 795|00 0 785 25 790 85 835|70 85 835 170 858|e8 175 858 300 895|00 0 845 40 860|e8 45 860 140 842|00 0 895 50 918|c0 55 918 145 928|e8 150 928 200 902|50 0 938 25 942|70 25 942 115 990|b8 115 990 205 990|e8 105 962 230 962|e8 210 990 325 1022|e8 225 970 300 945 380 918|90 525 835 640 872|d0 640 872 735 878|e0 735 878 915 868|b8 915 868 1005 868|e0 1005 868 1135 895|e0 1065 848 1220 908 1315 890|e0 1215 872 1410 925|d0 435 872 525 872|c0 525 872 615 930|e8 615 930 800 920|e8 745 908 825 925|d8 805 905 920 1012|d8 920 1012 1015 950|e8 835 900 985 955|d8 720 1010 895 930|d0 895 928 1005 928|e8 930 1035 1100 880|d0 418 945 540 932|c8 540 932 630 1008|c0 630 1008 715 965|e8 715 965 800 915|e8 1215 955 1310 970 1400 1000|60 945 1075 1038 978|70 1038 978 1125 1018|e8 1125 1018 1220 1025 1310 1005 1410 1090|00 0 1048 20 1048|a0 25 1048 130 1018|e8 130 1018 150 1018|e8 55 1052 190 1058 295 1078 378 1118 490 1035|b8 330 1022 435 990|c0 435 990 540 1088|c0 540 1088 630 1118|c8 630 1118 720 1100|e8 720 1100 785 1085|d0 475 1030 565 1032|e0 565 1035 650 1058|e8 385 1070 530 1095|e8 470 1108 520 1095|e8 650 1025 855 1082|d8 855 1082 945 1072|e8 810 1035 890 1048|e8 175 1088 240 1100|e8 565 1122 620 1135|00 0 1092 45 1095|50 45 1095 135 1225|70 0 1135 100 1122|e8 105 1125 200 1150|60 0 1165 25 1165|e8 25 1165 50 1168|70 0 1190 25 1190|e0 135 1225 225 1160 320 1150|d8 320 1150 405 1155|c8 405 1155 495 1160 590 1180|c0 590 1180 680 1225|70 680 1225 765 1268|d8 765 1268 855 1232|b0 855 1232 945 1210|10 945 1208 1030 1200|60 955 1190 1075 1210|e8 1080 1208 1110 1210|30 1110 1212 1120 1212|e8 1125 1215 1220 1235 1310 1188 1410 1215|e0 1160 1148 1250 1112 1345 1125 1410 1190|e8 1255 1135 1340 1125|d8 675 1172 800 1122|e0 800 1122 860 1205|d8 815 1140 960 1130|e8 960 1130 1070 1062 1150 1148|e8 1105 1130 1190 1090|e8 1195 1135 1250 1162|e8 1250 1060 1320 1045|e8 555 1285 650 1225 800 1130|d8 25 1190 100 1265|e8 25 1225 95 1265|e8 155 1262 290 1205 375 1305|e8 155 1290 260 1270 305 1320|e8 415 1240 525 1200|e8 375 1255 450 1278|c0 465 1320 525 1240|e0 525 1240 620 1320|e8 645 1275 740 1310|d8 375 1310 470 1320|e8 900 1265 950 1240|e8 1000 1290 1135 1265 1230 1255 1410 1250|b0 810 1318 910 1305|b0 910 1305 1000 1295|e8 1080 1250 1170 1310|c0 0 1290 100 1320`;
const T7 = `00 80 0 170 28|00 170 28 260 10 345 32|c0 345 32 400 0|00 0 92 100 98|00 28 68 145 115 240 148 325 162|00 100 98 175 70|d0 175 70 285 65|e8 285 65 320 82|40 325 162 415 140|b0 415 140 525 38|e8 525 30 630 98|e8 405 72 510 5|e8 290 115 440 82|e8 30 145 140 122|e0 0 152 50 205|00 55 205 140 218|e8 145 218 215 195|90 115 155 170 170|e8 175 170 235 185|90 235 185 280 192|e8 285 192 320 200|b8 225 210 340 245|e0 345 248 440 248|c0 440 248 520 160|b0 405 285 440 248|e8 450 325 510 280|30 0 250 55 272|e8 55 280 125 290|e8 100 280 185 265|70 0 305 40 338|20 40 338 135 332|00 135 332 225 290|30 225 290 315 310|60 315 310 405 285|e0 240 332 385 352|b0 385 355 565 362|d8 565 362 600 400|d8 260 350 290 390|c0 0 372 55 375|30 55 375 165 375|a0 165 375 250 352|60 0 450 20 460 105 465|40 105 465 190 435|00 190 435 375 448|e0 375 448 460 390|00 465 385 565 448 645 518|e8 420 445 515 472|e8 405 492 470 488|e8 55 428 150 435|c8 465 152 560 178|e0 560 178 650 198|d0 650 198 765 188|c8 765 188 860 140|e8 860 140 955 130|00 498 202 582 132|e8 582 128 680 160|e8 405 188 500 170|e8 680 128 810 152|e0 625 225 775 235|70 775 238 865 212|a8 865 212 985 212|e8 985 212 1030 205|c0 685 62 835 72|30 835 72 925 105|00 925 115 945 120 1030 200|e8 870 110 920 110|90 985 195 1105 142|e8 1105 142 1160 132|e0 1030 205 1120 205|e0 1120 205 1215 205|d0 1215 205 1300 188|00 1300 188 1395 205|e8 1395 205 1440 215|e8 1170 152 1230 152|90 795 25 850 0|00 865 15 970 0|60 945 5 1020 65|e8 690 60 640 0|e8 715 55 790 20|e8 975 70 1130 88|e8 1000 0 1055 70|e8 1065 5 1175 40 1210 85|80 1225 88 1320 72|00 1320 72 1410 120 1440 185|50 1335 12 1420 42|e8 1425 42 1440 35|e0 615 258 705 308|e8 705 308 785 272|e8 695 245 770 285|00 495 255 582 292|90 582 292 672 362|e8 672 362 755 412|c8 628 458 730 410|00 795 265 888 340|00 888 340 998 290|90 998 290 1090 370|e8 1090 375 1185 438 1280 452|c8 1035 280 1120 272|e0 1120 272 1215 298|b8 1215 298 1315 268|e8 1200 268 1320 290|00 1320 265 1405 300 1440 345|e8 975 368 1060 352|e8 1110 345 1175 300|e8 1150 355 1270 355|00 1275 355 1395 392|a8 1395 392 1440 385|00 748 372 892 432|e8 897 435 950 430|00 765 418 960 398|00 960 398 1045 478|e8 1045 482 1190 538 1220 530|e8 1320 440 1440 420|a0 1425 465 1440 470|e8 870 500 920 495|e8 660 535 780 495|e8 655 520 710 510|00 778 495 888 538 978 560|00 978 560 1062 630|e8 1065 632 1150 595 1200 620|00 1285 508 1380 488 1440 545|20 1298 562 1405 550|e8 1405 550 1440 550|e8 1045 555 1100 522|e8 885 590 950 578|e8 1035 578 1130 578|60 35 530 175 520|b8 175 520 265 535|e8 265 535 380 555|e8 235 525 320 505|e0 0 535 60 570|e8 45 600 155 552|00 0 575 35 600|e8 690 572 800 560 830 522|60 90 615 190 568|00 190 568 375 590|e0 375 592 465 535|50 465 535 580 512|e8 585 512 600 512|00 415 595 540 608|00 540 608 625 660|d8 625 660 715 655|d0 715 655 805 695|70 805 695 900 672|50 900 672 985 715|20 985 715 1075 762|e0 1075 765 1165 750 1310 735|e8 570 558 755 628|c0 990 645 1120 672|e0 1120 672 1220 665 1305 690 1340 735|c8 0 655 55 675|d8 55 675 165 620|d8 165 620 255 668|e0 255 668 430 632|90 435 632 520 665|e0 520 665 605 668|e8 240 680 350 692|e8 405 692 510 705|e8 660 692 710 680|e8 870 650 920 650|00 0 712 25 720|b0 25 720 115 710|70 115 710 165 712|e8 165 705 245 718|80 245 718 325 728|b0 325 728 415 728|b8 415 728 510 745|e0 510 745 620 715|d8 598 740 715 735|e0 715 735 815 700|e8 870 715 920 722|e8 1380 705 1440 710|e8 75 745 140 745|e8 75 768 170 790|d8 238 758 355 788|e8 355 788 480 795|e8 240 818 300 818|00 0 790 50 838|e8 55 845 110 848|b0 15 875 135 835|a0 135 835 310 858|b0 310 858 405 860|80 405 860 495 825|60 495 825 605 815|d8 615 815 700 818|e8 705 818 795 855|d0 795 855 885 895|e8 885 895 930 870|e8 538 770 620 808|e8 855 800 945 775|c0 945 775 1035 792|b8 1035 792 1120 828|e8 1130 830 1190 785 1315 762|e0 1315 762 1430 825|e8 1150 835 1250 868|80 865 830 955 848|a0 955 848 1045 882|e0 1045 882 1135 898|e8 1135 898 1225 902 1315 872|40 1315 872 1410 898|a0 1410 900 1440 915|e8 1345 890 1415 905|c8 505 855 625 872|e8 625 872 740 860|e8 105 895 230 882|e8 0 920 50 920|e8 375 902 465 908|e0 465 908 530 945|d0 495 902 610 915|e8 610 915 700 915 800 925 830 940|d8 0 958 40 952 135 920 225 925|c8 225 925 320 992|e8 135 958 230 968|e8 355 958 470 978|c0 415 1000 525 958|90 525 958 610 962|e8 610 962 705 998 795 998|b8 795 998 898 965|90 898 965 985 998|d0 985 998 1180 1028|e0 1180 1028 1280 1000 1375 1030 1440 1060|e8 985 958 1345 950|e8 1345 950 1440 1000|e8 90 980 175 1018|c0 175 1018 265 998|e0 265 998 415 1000|e8 505 1018 605 998|e0 505 1048 735 1058|e8 735 1058 830 1035 990 1048|e8 0 1040 25 1010 130 1080|d0 25 1122 140 1062 255 1040 390 1082|c8 390 1082 475 1062|c8 475 1062 565 1105|a8 565 1105 655 1100|d8 655 1100 745 1105|b8 745 1105 925 1148|d8 925 1148 1045 1130|d8 1045 1130 1135 1100|e8 1135 1100 1170 1090|b8 0 1072 75 1078|e8 75 1078 110 1080|e8 145 1088 200 1088|e8 225 1112 360 1118 390 1105|e8 445 1102 500 1095|b0 855 1088 945 1105|d8 945 1105 1035 1065|e0 1035 1065 1125 1065|b8 1125 1065 1225 1105|80 1225 1105 1315 1142|c0 1315 1142 1410 1155|d0 1410 1155 1440 1165|70 1215 1058 1295 1105|c8 1295 1105 1440 1120|e8 1335 1110 1385 1092|e8 1245 1035 1310 1060|b0 25 1162 115 1130|c0 115 1130 205 1148|c0 205 1148 355 1150|e8 265 1145 350 1150|c8 355 1148 430 1130|d8 430 1130 550 1135|d0 550 1135 660 1162|d0 660 1162 790 1145|e8 675 1135 840 1145|e8 1095 1145 1160 1140|e8 0 1205 85 1185|e0 85 1185 195 1185|e8 195 1185 345 1215|d8 345 1215 445 1170|d8 445 1170 540 1178|e0 540 1178 635 1225|e8 435 1208 640 1225 990 1232|d0 885 1178 995 1185|e0 995 1185 1105 1185|c0 1105 1185 1190 1180|d8 1190 1180 1320 1185|d0 1315 1195 1400 1190|e0 1405 1190 1440 1200|e8 1125 1220 1230 1232 1262 1225`;
const T8 = `e8 0 40 70 0|80 70 0 100 15|e8 100 15 200 75 245 80|e0 175 45 300 45 350 80|e8 320 40 410 40|c0 435 45 470 0|b0 470 5 560 5|e0 290 0 340 45|d0 10 95 105 55|d8 105 55 205 125|e0 205 125 295 115|e8 295 115 385 122|e0 385 122 475 115|c0 475 115 570 158|b0 570 158 655 140|a8 655 140 750 108|b8 750 108 835 122|c0 835 122 925 102|30 925 102 1015 132|e0 1015 132 1105 152 1130 152|d8 25 158 110 115|e8 110 115 180 122|e8 535 122 590 108|e0 475 68 585 62|d8 585 62 675 58|a8 675 58 765 75|c8 765 75 895 30|a8 895 30 985 70|00 985 70 1075 58|a8 1075 58 1165 98|e0 1165 98 1260 92 1390 120|e8 975 40 1050 18|e8 1185 5 1410 22|e8 1305 62 1405 60|e8 1260 62 1310 50|00 0 165 55 265|e0 55 270 100 278|e8 75 188 205 225 320 205|e8 105 175 240 195|e0 295 178 385 180|d8 385 180 475 215|b0 475 215 570 242|c0 570 242 655 232|e0 655 232 710 275|e8 690 225 740 210|d0 565 200 715 175|d0 715 175 795 200|c0 735 140 865 170|b0 885 178 1065 212|c0 1065 212 1165 188|d0 1165 188 1260 218|c0 1260 218 1345 280|c0 1345 280 1410 285|e8 795 205 850 210 965 185|e8 1095 218 1230 230|e8 915 152 965 175|e8 330 140 390 158|e8 1185 135 1290 130|e0 1195 142 1325 195 1410 175|e8 1305 148 1410 120|e0 75 230 180 265|e0 180 265 265 255|e0 265 255 355 255|e0 355 255 440 290|e8 440 290 510 290|d8 330 285 490 255|e8 490 255 510 255|a8 105 275 220 315|e0 225 315 275 290|e8 565 305 660 270|e8 885 262 1020 255|e8 1215 275 1260 265|e8 0 265 40 258|00 0 330 55 405|e0 0 385 100 365|a8 100 365 190 350|90 190 350 280 340|e0 285 340 375 390|e0 375 390 465 390|e8 345 318 465 405|e8 375 325 440 332|a8 465 388 555 328|a8 555 328 645 320|90 645 320 735 302|80 735 302 825 302|50 825 302 915 290|50 915 290 1035 265|30 1035 265 1120 295|a8 1120 295 1210 300|a8 1210 300 1300 295|e0 1300 295 1385 318|e8 60 408 85 412|e0 75 430 205 400|e0 200 408 285 425|e8 285 425 330 432|e8 325 420 395 412|80 475 418 565 400|d0 565 398 655 392|b0 655 392 745 345|e8 750 345 830 345|a0 655 342 765 380|70 765 380 855 375|10 855 375 945 362|50 945 362 1035 312|e8 1035 312 1115 318|e8 865 332 950 328|c8 1045 338 1180 415|e0 1005 370 1130 370|e8 1130 370 1220 325|e8 805 418 905 402|e8 885 435 965 440|00 868 478 1005 395|a0 715 445 868 478|e8 1125 440 1195 420|d0 1195 420 1275 402|d0 1275 402 1410 402|e8 435 440 500 475|e0 158 465 265 468|e8 265 468 340 482|d8 265 550 360 475|e8 360 475 445 505|e8 155 498 275 515|e8 325 512 395 505|e0 0 468 75 505|c0 75 505 160 520|b0 160 520 265 542|e8 100 515 155 522|00 445 505 535 518|b0 535 518 625 522|e8 625 522 680 550|70 565 478 655 478|00 655 478 745 482|a0 745 482 865 528|e8 795 510 860 508|00 868 530 968 522|00 968 522 1062 480|e8 1065 478 1115 462|e8 880 535 965 535|e8 975 525 1040 532|e8 1078 522 1175 518|b8 1050 608 1135 490|e0 1135 480 1235 505 1320 498 1405 460|e8 1305 450 1340 460|e8 1280 518 1400 535|70 55 542 145 560|e8 145 562 255 558|00 0 540 25 575|70 25 575 120 688|70 120 688 205 720|90 205 720 295 772|e0 295 772 385 798|b0 385 800 475 770|a0 475 770 565 778|e8 570 778 620 700|e8 265 590 360 615 450 580 500 560|e8 360 615 450 695 485 680|e8 105 598 195 615 232 590|e8 415 602 470 602|a0 160 670 265 638|e8 265 638 450 695|80 535 572 640 578|00 640 578 730 592|d0 730 592 825 600|e8 825 600 925 598|90 925 598 960 588|90 960 588 1048 608|e8 745 560 845 568|e8 1095 598 1185 602 1275 520|e8 1215 602 1410 595|00 465 632 550 620|b0 550 620 645 645|b8 645 645 738 708|70 738 708 835 632|90 835 632 960 588|e8 1005 645 1070 645|e8 705 658 755 630|e8 1168 662 1260 662 1350 635 1410 680|00 525 700 640 688|e8 645 688 665 688|00 835 680 950 675|00 950 675 1035 688|00 1035 688 1120 692|e0 1125 692 1225 738 1290 790|e8 0 700 115 715|e0 60 715 100 675|e8 0 650 30 670|70 675 745 775 760|e8 775 760 800 760|50 705 820 800 762|50 800 762 880 742|90 880 742 970 742|e8 975 740 1110 722|e8 160 745 230 785|e8 300 722 365 775|e8 345 725 392 772|e8 615 765 690 812|b8 835 808 940 785|e8 940 785 1050 770|60 855 895 940 835|c0 940 830 1030 800|c0 1030 800 1120 790|e0 1120 790 1210 810 1305 822 1410 800|e8 1125 835 1200 825|e8 1320 910 1410 875|e8 840 862 905 830|e8 0 822 90 760|c0 90 760 190 810|e8 190 810 320 872|e8 45 790 95 800|60 10 862 105 818|50 105 818 190 850|b8 190 850 280 898|e8 105 872 140 870|c8 75 898 225 902|e8 225 902 240 902|e8 285 902 460 908|a8 465 908 590 908|b8 590 908 670 888|d0 670 888 850 892|00 445 855 550 842|90 550 842 705 820|e8 705 852 800 860|e8 555 882 650 865|00 945 908 1040 895 1120 890|d0 1120 890 1210 895|e8 1210 895 1300 950 1410 990|e8 1165 945 1235 935|a0 895 930 1005 950|e0 625 938 895 932|e8 1035 950 1115 930|e8 1010 950 1040 1010|c0 0 905 55 945|d0 55 945 150 955|e0 150 955 345 932|e0 355 940 460 972|e8 460 972 545 975|e8 255 1012 355 950|e0 285 1012 405 985 500 1018 600 975|e8 600 975 635 982|e8 0 1005 135 985|e0 160 998 260 1012|e8 885 992 985 992|b0 1035 1012 1125 960|c8 1125 960 1300 1020|e8 1300 1020 1410 1030|c8 590 1015 650 1005 820 1012|c8 470 1072 590 1015|c0 820 1012 945 1040|c0 945 1040 1045 1082|d8 1045 1085 1135 1082|a0 1135 1082 1220 1100|b0 1220 1100 1315 1105|a8 1315 1105 1410 1080|a0 105 1058 190 1075|b0 190 1075 285 1075|c0 285 1075 380 1125|c0 380 1125 470 1072|e8 0 1085 140 1088|d8 0 1125 105 1058|e8 160 1038 210 1032|e8 375 1040 440 1058|e8 325 1062 420 1100|e8 805 1060 860 1052|e8 0 1120 110 1000|b0 475 1120 590 1090|b8 590 1090 660 1065|c0 660 1065 780 1072|c0 780 1072 865 1095|a8 865 1095 955 1090|e0 955 1090 1045 1095|d0 1105 995 1200 1085|e8 1200 1085 1262 1000|e8 1195 1045 1290 1040|a8 525 1132 640 1112|e8 640 1110 680 1105|e0 690 1098 750 1100|e8 775 1130 890 1130|e8 690 1170 780 1105|a0 45 1135 140 1145|e0 75 1140 130 1145|90 150 1148 235 1130|e8 235 1130 270 1135|e8 60 1180 145 1140|c8 1018 1142 1135 1118|e8 1135 1118 1160 1118|e8 0 1165 60 1180|e8 0 1205 90 1235|b8 90 1235 225 1172|a8 225 1172 310 1172|e0 310 1172 505 1172|c8 505 1172 600 1178|e0 600 1178 685 1165|a8 685 1190 770 1172|c0 770 1172 865 1172|b8 865 1172 950 1168|d0 950 1168 1045 1172|b0 1045 1172 1140 1165|b0 1140 1165 1220 1148|c8 1220 1148 1315 1140|a0 1315 1140 1410 1165|e8 330 1220 395 1200|e8 435 1200 515 1208|e8 825 1220 950 1222 1190 1225 1325 1238|e8 1275 1185 1370 1205|e8 1365 1235 1410 1228`;
const T9 = `00 357 100 430 30 490 0|e0 470 35 630 35|e0 630 35 720 52|90 720 52 800 47|90 800 47 875 58|e0 875 58 1050 175|e0 1050 175 1130 155 1210 180|e8 430 95 505 70|e8 525 112 610 105|e8 770 138 925 130|e8 925 135 960 130|e8 890 195 990 140|e8 980 100 1040 128|a8 1110 120 1205 0|70 1235 0 1310 100|80 1310 100 1385 100|e8 1385 100 1490 40 1540 5|e8 1300 20 1340 50|e8 1370 5 1445 50|00 1162 105 1245 112|00 1245 112 1320 205|60 1320 205 1395 270|e0 1395 275 1475 298|00 1475 298 1568 285|50 1490 142 1568 150|e8 1415 185 1490 145|e8 1515 235 1568 220|a0 370 140 470 200|30 357 250 430 185|30 430 185 510 145|e8 510 145 610 160|e0 610 160 665 270|e0 470 200 555 265 650 310|e8 525 190 585 238|e0 565 195 630 235|e0 370 320 445 275|e8 445 275 530 275|e8 575 292 630 292|e8 1255 268 1340 275|a0 357 402 430 372|b0 430 372 510 318|e0 510 318 590 330 670 295|a8 665 278 760 228|00 760 228 838 215|a0 838 215 915 238|e0 915 238 1075 268 1150 245|00 1150 248 1230 198|e8 1230 198 1290 205|e8 790 262 870 290 955 292|e8 650 295 750 330|e8 785 330 900 335|e8 900 335 935 328|d8 955 292 1120 378|e8 965 348 1080 378|e8 1010 420 1070 378|00 718 365 870 388|50 870 388 950 412|e8 950 412 1020 458 1090 480|e8 1075 340 1185 365|a8 1125 378 1215 352|d0 1215 352 1290 408|90 1125 295 1235 318|60 1235 318 1310 370|50 1310 370 1388 425|90 1388 425 1465 442|50 1465 445 1545 425|a0 1545 425 1568 435|e8 1375 368 1420 315|e8 1415 390 1495 405 1568 350|e8 1465 485 1535 492|e8 1375 220 1480 270|b8 405 462 480 395|d8 480 395 560 402|d8 560 402 620 395|e8 510 438 610 445|e8 600 470 665 395|b0 665 388 755 430|e0 640 458 750 430|e0 755 435 845 492|90 795 412 875 425|a0 875 425 965 490|e8 965 490 1012 478|e8 890 498 935 478|a0 357 570 430 535|c8 430 535 510 520|e8 510 520 600 470|e8 600 470 680 492 810 505|a8 680 545 760 525|a0 760 525 915 565|e0 915 565 1000 542 1075 520|e0 1075 520 1150 580|e8 900 520 1015 520|e8 1135 535 1210 572|00 1155 585 1255 515|70 1255 515 1335 540|d0 1335 540 1415 568|d8 1415 568 1495 592|e8 1360 520 1495 565|d8 1495 592 1568 550|e8 1085 435 1175 448|d8 1175 450 1258 430|c8 1258 430 1360 462|e8 1360 462 1430 475|e8 1090 470 1240 505|e8 1110 497 1175 497|e8 485 560 565 525|e8 565 525 720 585 775 632|e0 565 600 650 575|e8 825 580 895 595|e8 955 595 1030 575 1115 570|e8 357 640 430 625 512 608|d0 512 608 600 635|c8 600 635 745 700 820 718|c8 820 718 900 742 980 778|e8 985 785 1070 715 1140 675|d0 665 625 790 615|c8 790 615 865 645 945 690|c0 945 690 1020 665 1100 635|c8 1100 635 1205 680|a8 1205 680 1280 660|90 1280 660 1395 665|d8 1395 665 1475 665|b8 1475 665 1568 688|e8 925 630 1030 625|e8 1030 625 1065 618|d0 1110 612 1205 618|d0 1205 618 1280 605|d8 1280 605 1365 610|d0 1365 610 1450 640|e8 1450 640 1510 615|e8 470 672 530 645|b0 365 695 455 702|d0 455 702 535 688|e8 535 688 620 670|e0 760 672 835 678|e8 835 678 880 678|b8 1285 690 1360 680|e8 1360 680 1445 705|e8 390 738 465 738|e8 992 715 1055 705|e8 1150 702 1240 702|e8 395 785 470 762|b8 470 762 560 715|d8 560 715 640 700 690 710|c0 525 795 605 760|c0 605 760 680 755|e8 680 755 765 725|d8 640 822 745 778|e8 535 833 640 822|d8 745 778 840 785|e0 840 785 920 812 985 785|e8 735 815 855 822|e0 1020 790 1095 785|e0 1095 785 1205 810|d8 1205 810 1310 805|e8 1310 805 1388 765 1505 828 1568 810|e8 1020 822 1160 822|b8 1085 738 1180 750|d0 1180 750 1265 735|d8 1265 735 1345 742|b8 1345 745 1450 745|90 1450 745 1525 728|e8 1525 730 1568 735|e8 1475 768 1568 745`;
const T10 = `e8 136 1013 170 1015|c0 136 1080 165 1068|d0 165 1068 195 1075|60 136 1130 165 1115|e8 165 1110 220 1105|e0 165 1030 220 1050|e8 140 1000 175 1005|e8 300 1025 350 1000|e8 300 1012 360 1060|e0 282 1052 320 1055 350 1075 390 1100|e8 350 1075 395 1080|c8 305 1112 330 1112|e0 290 1130 350 1135 385 1135|e0 300 1165 340 1170|e8 345 1080 390 1108|90 434 1013 465 1012|60 465 1015 500 1035|c8 500 1035 525 1030|e0 434 1040 470 1037|20 470 1035 510 1055|00 434 1073 480 1071|90 480 1071 520 1078|e8 440 1060 520 1065|00 465 1105 500 1107|90 500 1107 530 1132|00 465 1123 495 1152|a8 465 1123 425 1190|70 465 1140 500 1185 530 1185|e8 520 1000 560 990|e8 555 1018 600 1045|00 600 1095 635 1110|90 570 1150 600 1142 620 1165|60 600 1070 635 1085|e8 530 1085 590 1060|c8 530 1150 575 1120|e8 560 1165 610 1140|90 525 1025 605 1052|c0 550 1060 600 1075|60 600 1120 630 1125|00 565 1250 595 1245 625 1252|00 600 1265 635 1292|60 590 1295 620 1303|50 575 1197 625 1210|b0 600 1340 640 1320|c8 590 1390 630 1372|d8 590 1415 640 1395|d8 590 1360 625 1350|d0 590 1320 630 1330|e0 596 1232 630 1240|e0 585 1180 635 1172|d8 590 1275 640 1280|e8 590 1425 640 1420`;

const tone = (c) => {
  if (c.length === 6) return `#${c}`;
  let g = parseInt(c, 16);
  if (g >= 192) g = Math.round(g + (255 - g) * 0.12);
  const h = g.toString(16).padStart(2, "0");
  return `#${h}${h}${h}`;
};

const parse = (txt, ox, oy, sx, sy) =>
  txt.split(/[|\n]/).filter(Boolean).map((s) => {
    const [c, ...n] = s.trim().split(" ");
    const pts = [];
    for (let i = 0; i + 1 < n.length; i += 2) {
      pts.push(`${(ox + Number(n[i]) / sx - 136).toFixed(1)},${(oy + Number(n[i + 1]) / sy - 133).toFixed(1)}`);
    }
    return { stroke: tone(c), points: pts.join(" ") };
  });

const TRACES = [
  ...parse(T10, 0, 0, 1, 1),
  ...parse(T9, 0, 1150, 2.613, 3),
  ...parse(T1, 136, 133, 3, 3),
  ...parse(T2, 616, 133, 3, 3),
  ...parse(T3, 1096, 133, 3, 3),
  ...parse(T4, 136, 573, 3, 3),
  ...parse(T6, 1096, 573, 3, 3),
  ...parse(T7, 616, 1013, 3, 3),
  ...parse(T8, 1096, 1013, 3, 3),
  ...parse(T5, 616, 573, 3, 3),
];

function Doc({ x = 23, y = 4, w = 34, h = 39 }) {
  return (
    <>
      <defs>
        <linearGradient id="docg" x1="0" y1="0" x2="1" y2="1">
          <stop offset="0" stopColor="#ffffff" />
          <stop offset="1" stopColor="#dedede" />
        </linearGradient>
      </defs>
      <ellipse cx={x + w / 2} cy={y + h + 3} rx={w / 2} ry="2" fill="#000" opacity="0.18" />
      <path d={`M${x} ${y}H${x + w}V${y + h - 12}L${x + w - 12} ${y + h}H${x}Z`} fill="url(#docg)" />
      <path d={`M${x + w} ${y + h - 12}L${x + w - 10} ${y + h - 10}L${x + w - 12} ${y + h}Z`} fill="#c4c4c4" />
    </>
  );
}

function NewIcon() {
  return (
    <svg width="80" height="50" viewBox="0 0 80 50">
      <Doc />
      <g stroke="#f4c430" strokeWidth="1.4">
        <path d="M27 2V20M18 11H36M20.5 4.5L33.5 17.5M33.5 4.5L20.5 17.5M23 3L31 19M31 3L23 19M19 7L35 15M19 15L35 7" />
      </g>
      <circle cx="27" cy="11" r="5.5" fill="#ffd94d" />
    </svg>
  );
}

function OpenIcon() {
  return (
    <svg width="80" height="50" viewBox="0 0 80 50">
      <defs>
        <linearGradient id="fldg" x1="0" y1="0" x2="0" y2="1">
          <stop offset="0" stopColor="#8fb6ee" />
          <stop offset="1" stopColor="#2f64c0" />
        </linearGradient>
      </defs>
      <ellipse cx="40" cy="42" rx="20" ry="3" fill="#000" opacity="0.3" />
      <rect x="22" y="8" width="36" height="24" rx="2" fill="#5c8ee0" />
      <rect x="26" y="4" width="28" height="23" fill="#efefef" />
      <path d="M28 24H52L54 25H62L58 38H22L18 25H26Z" fill="url(#fldg)" />
    </svg>
  );
}

function SaveAsIcon() {
  return (
    <svg width="80" height="50" viewBox="0 0 80 50">
      <rect x="21" y="4" width="38" height="40" rx="2" fill="#333" />
      <rect x="31" y="4" width="19" height="12" fill="#d8d8d8" />
      <rect x="43" y="6" width="4" height="8" fill="#333" />
      <rect x="23" y="21" width="34" height="22" rx="1" fill="#dcdcdc" />
      <path d="M26 27H54M26 32H50M26 37H46" stroke="#8a8a8a" strokeWidth="1" />
      <path d="M32 39L59 6" stroke="#222" strokeWidth="6" />
      <path d="M32 39L59 6" stroke="#d9b32e" strokeWidth="3.6" />
      <path d="M30 42L31 36L35 39Z" fill="#222" />
    </svg>
  );
}

function RevertIcon() {
  return (
    <svg width="80" height="50" viewBox="0 0 80 50">
      <ellipse cx="40" cy="45" rx="18" ry="2" fill="#000" opacity="0.18" />
      <path d="M39 4H60V26L52 34H39Z" fill="#7d7975" />
      <path d="M20 14H48V34L38 42H20Z" fill="#76726e" />
      <path d="M60 10C48 8 38 12 35 17L31 12L28 26L42 24L38 20C42 15 50 13 60 10Z" fill="#a3904a" />
    </svg>
  );
}

function ImportIcon() {
  return (
    <svg width="80" height="50" viewBox="0 0 80 50">
      <Doc x={27} y={3} w={34} h={39} />
      <path d="M18 16H38V10L48 19L38 28V22H18Z" fill="#ffffff" stroke="#c8c8c8" strokeWidth="1" />
    </svg>
  );
}

function ExportIcon() {
  return (
    <svg width="80" height="50" viewBox="0 0 80 50">
      <Doc x={19} y={3} w={36} h={39} />
      <path d="M38 16H52M38 22H54M48 10L56 19L48 28" fill="none" stroke="#b0b0b0" strokeWidth="1" />
    </svg>
  );
}

const ICONS = [NewIcon, OpenIcon, SaveAsIcon, RevertIcon, ImportIcon, ExportIcon];

function Toolbar({ className = "" }) {
  return (
    <div className={`flex shrink-0 ${className}`}>
      {ICONS.map((Icon, i) => (
        <div key={i} className="w-[80px] h-[50px] shrink-0">
          <Icon />
        </div>
      ))}
    </div>
  );
}

const FONT = "[font-family:'Liberation_Sans',Arial,sans-serif]";

export default function App() {
  return (
    <div className={`relative w-[1566px] h-[1464px] overflow-hidden bg-[#2a2b2b] ${FONT}`}>
      <div className="h-[93px] bg-[#2e2725] border-l-2 border-[#3a3432] pl-[1110px] pt-[6px] overflow-hidden">
        <Toolbar className="grayscale opacity-40" />
      </div>
      <div className="w-[40px] pl-[16px] pt-[141px] border-l-2 border-[#3f3f3f] overflow-hidden">
        {["50", "45", "40", "35", "30"].map((t) => (
          <div key={t} className="h-[250px] text-[24.5px] leading-6 text-[#b4b4b4] whitespace-nowrap">
            {t}
          </div>
        ))}
      </div>

      <div className="absolute left-[40px] top-[28px] w-[1526px] h-[1436px] rounded-tl-[16px] overflow-hidden border-t border-l border-t-[#141010] border-l-[#6a6a6a] bg-[#2f2f2f]">
        <div className="h-[104px] flex items-center bg-[#3f3736] border-t border-t-[#7a7270] border-b border-b-black rounded-tl-[15px] overflow-hidden">
          <div className="w-[1071px] shrink-0 flex items-center pl-[39px]">
            <span className="w-6 h-6 rounded-full bg-[#ef6a5e]" />
            <span className="w-6 h-6 rounded-full bg-[#f5bd4f] ml-4" />
            <span className="w-6 h-6 rounded-full bg-[#61c554] ml-4" />
            <span className="ml-[39px] text-[29px] font-semibold text-[#ece9e8] whitespace-nowrap [font-family:Inter,sans-serif]">
              Analysis-AM HATE CLEAN.wav
            </span>
          </div>
          <Toolbar className="-mt-[21px]" />
        </div>

        <div className="flex h-[1331px]">
          <div className="w-[95px] shrink-0 border-r-2 border-black bg-[#2f2f2f] pt-[48px] overflow-hidden">
            {["2500", "2000", "1500", "1000", "500"].map((t) => (
              <div key={t} className="h-[250px] flex items-start justify-end">
                <span className="text-[24.5px] leading-6 mt-[1px] text-[#e0e0e0] mr-[10px]">{t}</span>
                <span className="w-[11px] h-[2px] mt-[11px] bg-black" />
              </div>
            ))}
            <div className="flex items-start justify-end">
              <span className="text-[24.5px] leading-6 mt-[1px] text-[#e0e0e0]">0</span>
              <span className="w-[21px] h-[2px] mt-[10px] bg-black" />
            </div>
          </div>

          <div className="w-[1430px] shrink-0 flex flex-col">
            <div className="h-[1310px] bg-white border-t border-t-[#b5b5b5] border-b-2 border-b-black overflow-hidden">
              <svg width="1430" height="1309" viewBox="0 0 1430 1309" className="block -mt-px" fill="none">
                {TRACES.map((t, i) => (
                  <polyline
                    key={i}
                    points={t.points}
                    stroke={t.stroke}
                    strokeWidth="4.8"
                    strokeLinecap="round"
                    strokeLinejoin="round"
                  />
                ))}
              </svg>
            </div>
            <div className="flex-1 flex bg-[#333333]">
              {[0, 1, 2, 3, 4, 5, 6, 7].map((i) => (
                <div key={i} className="w-[200px] shrink-0">
                  <div className={`w-[2px] -ml-px bg-black ${i % 2 === 0 ? "h-full" : "h-[9px]"}`} />
                </div>
              ))}
            </div>
          </div>
        </div>
      </div>
    </div>
  );
}
